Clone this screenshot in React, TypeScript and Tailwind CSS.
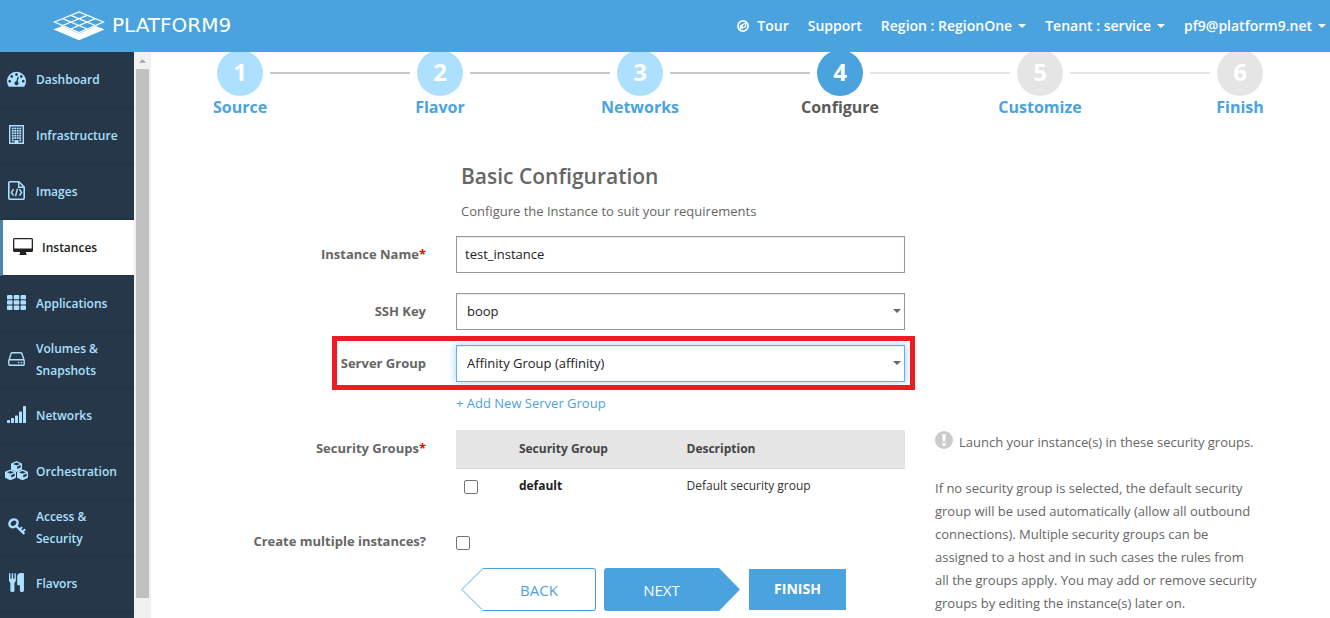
import React, { useState } from 'react';

type IconProps = { className?: string };

const DashboardIcon: React.FC<IconProps> = ({ className }) => (
  <svg viewBox="0 0 1792 1792" fill="currentColor" className={className} aria-hidden="true">
    <path d="M384 1152q0-53-37.5-90.5t-90.5-37.5-90.5 37.5-37.5 90.5 37.5 90.5 90.5 37.5 90.5-37.5 37.5-90.5zm192-448q0-53-37.5-90.5t-90.5-37.5-90.5 37.5-37.5 90.5 37.5 90.5 90.5 37.5 90.5-37.5 37.5-90.5zm428 481l101-382q6-26-7.5-48.5t-38.5-29.5-48 6.5-30 39.5l-101 382q-60 5-107 43.5t-63 98.5q-20 77 20 146t117 89 146-20 89-117q16-60-6-117t-72-91zm660-33q0-53-37.5-90.5t-90.5-37.5-90.5 37.5-37.5 90.5 37.5 90.5 90.5 37.5 90.5-37.5 37.5-90.5zm-640-640q0-53-37.5-90.5t-90.5-37.5-90.5 37.5-37.5 90.5 37.5 90.5 90.5 37.5 90.5-37.5 37.5-90.5zm448 192q0-53-37.5-90.5t-90.5-37.5-90.5 37.5-37.5 90.5 37.5 90.5 90.5 37.5 90.5-37.5 37.5-90.5zm320 448q0 261-141 483-19 29-54 29h-1402q-35 0-54-29-141-221-141-483 0-182 71-348t191-286 286-191 348-71 348 71 286 191 191 286 71 348z" />
  </svg>
);

const BuildingIcon: React.FC<IconProps> = ({ className }) => (
  <svg viewBox="0 0 15 19" fill="currentColor" className={className} aria-hidden="true">
    <path d="M0 0h15v19H0zM1.4 1.4v16.2H5.5v-2.6h4v2.6h4.1V1.4z" fillRule="evenodd" />
    {[2.6, 5, 7.4, 9.8, 12.2].map((y) =>
      [2.8, 5.3, 7.8, 10.3].map((x) => (
        <rect key={`${x}-${y}`} x={x} y={y} width="1.9" height="1.8" />
      ))
    )}
    <rect x="2.8" y="14.6" width="1.9" height="1.7" />
    <rect x="10.3" y="14.6" width="1.9" height="1.7" />
    <rect x="6.5" y="16" width="2" height="2.5" />
  </svg>
);

const FileCodeIcon: React.FC<IconProps> = ({ className }) => (
  <svg viewBox="0 0 17 19" fill="none" stroke="currentColor" className={className} aria-hidden="true">
    <path d="M1.7.8h9.2l5.3 5.2v11.3q0 .9-.9.9H1.7q-.9 0-.9-.9V1.7q0-.9.9-.9z" strokeWidth="1.6" />
    <path d="M10.7 1v5.2H16" strokeWidth="1.4" />
    <path d="M5.5 8.2L3.4 11.4l2.1 3.2M11.5 8.2l2.1 3.2-2.1 3.2M9.5 7.6L7.5 15.2" strokeWidth="1.5" />
  </svg>
);

const DesktopIcon: React.FC<IconProps> = ({ className }) => (
  <svg viewBox="0 0 20 17" fill="currentColor" className={className} aria-hidden="true">
    <path
      fillRule="evenodd"
      d="M1.5 0h17A1.5 1.5 0 0 1 20 1.5v11a1.5 1.5 0 0 1-1.5 1.5H13v1.5h.5V17h-7v-1.5H7V14H1.5A1.5 1.5 0 0 1 0 12.5v-11A1.5 1.5 0 0 1 1.5 0zM1.3 1.3v9.2h17.4V1.3z"
    />
  </svg>
);

const GridIcon: React.FC<IconProps> = ({ className }) => (
  <svg viewBox="0 0 19 15" fill="currentColor" className={className} aria-hidden="true">
    {[0, 5.3, 10.6].map((y) =>
      [0, 6.75, 13.5].map((x) => (
        <rect key={`${x}-${y}`} x={x} y={y} width="5.5" height="4.3" rx="0.9" />
      ))
    )}
  </svg>
);

const DriveIcon: React.FC<IconProps> = ({ className }) => (
  <svg viewBox="0 256 1536 1280" fill="currentColor" className={className} aria-hidden="true">
    <path d="M1040 1216q0 33-23.5 56.5t-56.5 23.5-56.5-23.5-23.5-56.5 23.5-56.5 56.5-23.5 56.5 23.5 23.5 56.5zm256 0q0 33-23.5 56.5t-56.5 23.5-56.5-23.5-23.5-56.5 23.5-56.5 56.5-23.5 56.5 23.5 23.5 56.5zm112 160v-320q0-13-9.5-22.5t-22.5-9.5h-1216q-13 0-22.5 9.5t-9.5 22.5v320q0 13 9.5 22.5t22.5 9.5h1216q13 0 22.5-9.5t9.5-22.5zm-1230-480h1180l-157-482q-4-13-16-21.5t-26-8.5h-782q-14 0-26 8.5t-16 21.5zm1358 160v320q0 66-47 113t-113 47h-1216q-66 0-113-47t-47-113v-320q0-25 16-75l197-606q17-53 63-86t101-33h782q55 0 101 33t63 86l197 606q16 50 16 75z" />
  </svg>
);

const SignalIcon: React.FC<IconProps> = ({ className }) => (
  <svg viewBox="0 0 19 17" fill="currentColor" className={className} aria-hidden="true">
    <rect x="0" y="14" width="3" height="3" rx="0.4" />
    <rect x="4" y="12" width="3" height="5" rx="0.4" />
    <rect x="8" y="9.5" width="3" height="7.5" rx="0.4" />
    <rect x="12" y="5.5" width="3" height="11.5" rx="0.4" />
    <rect x="16" y="0" width="3" height="17" rx="0.4" />
  </svg>
);

const CubesIcon: React.FC<IconProps> = ({ className }) => (
  <svg viewBox="0 0 23 19" fill="currentColor" fillRule="evenodd" className={className} aria-hidden="true">
    {['translate(6 0)', 'translate(0 8.4)', 'translate(12 8.4)'].map((transform) => (
      <path
        key={transform}
        transform={transform}
        d="M5.5 0l5 2.2.5.7V8l-.5.7-5 2.2-5-2.2L0 8V2.9l.5-.7zM5.5 1.5L2.1 2.9l3.4 1.5 3.4-1.5zM6.2 5.5v2.6l3.5-1.5V4z"
      />
    ))}
  </svg>
);

const KeyIcon: React.FC<IconProps> = ({ className }) => (
  <svg
    viewBox="0 0 18 17"
    fill="none"
    stroke="currentColor"
    className={className}
    aria-hidden="true"
  >
    <ellipse cx="5.5" cy="5.3" rx="4.3" ry="3.6" strokeWidth="2.5" transform="rotate(-40 5.5 5.3)" />
    <path d="M8.3 8l8 8" strokeWidth="2.4" />
    <path d="M11.8 11.4l2.3-2.3M14.4 14l2.7-2.7" strokeWidth="2" />
  </svg>
);

const CutleryIcon: React.FC<IconProps> = ({ className }) => (
  <svg viewBox="0 0 1408 1792" fill="currentColor" className={className} aria-hidden="true">
    <path d="M640 64v640q0 61-35.5 111t-92.5 70v779q0 52-38 90t-90 38h-128q-52 0-90-38t-38-90v-779q-57-20-92.5-70t-35.5-111v-640q0-26 19-45t45-19 45 19 19 45v416q0 26 19 45t45 19 45-19 19-45v-416q0-26 19-45t45-19 45 19 19 45v416q0 26 19 45t45 19 45-19 19-45v-416q0-26 19-45t45-19 45 19 19 45zm768 0v1600q0 52-38 90t-90 38h-128q-52 0-90-38t-38-90v-512h-224q-13 0-22.5-9.5t-9.5-22.5v-800q0-132 94-226t226-94h256q26 0 45 19t19 45z" />
  </svg>
);

const CompassIcon: React.FC<IconProps> = ({ className }) => (
  <svg viewBox="0 0 12 12" className={className} aria-hidden="true">
    <circle cx="6" cy="6" r="5.1" fill="none" stroke="currentColor" strokeWidth="1.7" />
    <path fill="currentColor" fillRule="evenodd" d="M9.2 2.3v4.7L2.8 9.7V5.2zM6 4.9v2.3l2-1.2V4z" />
  </svg>
);

const Caret: React.FC<IconProps> = ({ className }) => (
  <svg viewBox="0 0 8 4" fill="currentColor" className={className} aria-hidden="true">
    <path d="M0 0h8L4 4z" />
  </svg>
);

const LogoMark: React.FC<IconProps> = ({ className }) => (
  <svg viewBox="0 0 52 30" className={className} aria-hidden="true">
    <g fill="none" stroke="#fff" strokeWidth="1.3">
      <path d="M26 .9L50.5 11 26 21.5 1.5 11z" />
      <path d="M17.8 4.3L42.3 14.5M9.7 7.6L34.2 18M34.2 4.3L9.7 14.5M42.3 7.6L17.8 18" />
    </g>
    <path d="M.5 18.5L9 15l17 7.5L43 15l8.5 3.5L26 29.3z" fill="#fff" />
  </svg>
);

const navItems = [
  { label: 'Dashboard', Icon: DashboardIcon, size: 'w-[19px] h-[19px]' },
  { label: 'Infrastructure', Icon: BuildingIcon, size: 'w-[15px] h-[19px]' },
  { label: 'Images', Icon: FileCodeIcon, size: 'w-[17px] h-[19px]' },
  { label: 'Instances', Icon: DesktopIcon, size: 'w-[20px] h-[17px]' },
  { label: 'Applications', Icon: GridIcon, size: 'w-[19px] h-[15px]' },
  { label: 'Volumes & Snapshots', Icon: DriveIcon, size: 'w-[17px] h-[14px]' },
  { label: 'Networks', Icon: SignalIcon, size: 'w-[19px] h-[17px]' },
  { label: 'Orchestration', Icon: CubesIcon, size: 'w-[23px] h-[19px]' },
  { label: 'Access & Security', Icon: KeyIcon, size: 'w-[18px] h-[17px]' },
  { label: 'Flavors', Icon: CutleryIcon, size: 'w-[15px] h-[19px]' },
];

const steps = ['Source', 'Flavor', 'Networks', 'Configure', 'Customize', 'Finish'];
const currentStep = 3;

const fieldClass =
  'w-full h-[37px] border border-[#999] bg-white text-[13px] text-[#222] shadow-[inset_0_1px_1px_rgba(0,0,0,0.08)] outline-none';
const labelClass = 'pb-0.5 text-right text-[13px] leading-5 font-bold text-[#666]';
const rowClass = 'grid grid-cols-[275fr_449fr_331fr] gap-x-[30px] pr-16';

const Header: React.FC = () => (
  <header className="flex shrink-0 items-center justify-between h-[52px] pl-[53px] pr-1 bg-[#4aa3df] text-white">
    <a href="#home" className="flex items-center gap-[7px]">
      <LogoMark className="w-[52px] h-[30px]" />
      <span className="pb-0.5 font-['DejaVu_Sans'] text-[20px] leading-6">PLATFORM9</span>
    </a>
    <nav className="flex items-center gap-[19px] text-sm font-semibold whitespace-nowrap">
      <a href="#tour" className="flex items-center gap-2">
        <CompassIcon className="w-3 h-3" />
        Tour
      </a>
      <a href="#support">Support</a>
      {['Region : RegionOne', 'Tenant : service', 'pf9@platform9.net'].map((label) => (
        <button key={label} type="button" className="flex items-center gap-[6px]">
          {label}
          <Caret className="w-2 h-1" />
        </button>
      ))}
    </nav>
  </header>
);

const Sidebar: React.FC = () => (
  <div className="flex shrink-0">
    <nav className="w-[134px] overflow-hidden bg-[#253748] text-xs leading-[22px] font-semibold">
      {navItems.map(({ label, Icon, size }) => {
        const active = label === 'Instances';
        return (
          <a
            key={label}
            href={`#${label}`}
            className={`flex items-center gap-2 h-14 border-b border-[#1a3347] ${
              active
                ? 'bg-white text-[#222] border-l-3 border-l-[#4a86ae] pl-2'
                : 'text-[#ade0ff] pl-[5px]'
            }`}
          >
            <span className="flex shrink-0 justify-center w-[23px] pb-0.5">
              <Icon className={size} />
            </span>
            <span className="pr-2">{label}</span>
          </a>
        );
      })}
    </nav>
    <div className="flex flex-col items-center w-[17px] bg-[#f1f1f1]">
      <div className="flex shrink-0 items-center justify-center h-[17px] text-[#a3a3a3]">
        <Caret className="w-[7px] h-1 rotate-180" />
      </div>
      <div className="grow w-[13px] mb-5 bg-[#c1c1c1]" />
    </div>
  </div>
);

const Stepper: React.FC = () => (
  <ol className="grid grid-cols-6 -ml-[11px] -mr-[10px] -mt-[2px]">
    {steps.map((step, i) => {
      const lineColor = (reached: boolean) => (reached ? 'bg-[#c8c8c8]' : 'bg-[#e5e5e5]');
      return (
        <li key={step} className="flex flex-col">
          <div className="flex items-center">
            <span className={`grow h-[2px] mr-[7px] ${i === 0 ? 'invisible' : lineColor(i <= currentStep)}`} />
            <span
              className={`flex items-center justify-center w-[46px] h-[46px] pb-0.5 rounded-full text-2xl font-bold text-white ${
                i < currentStep ? 'bg-[#ade0ff]' : i === currentStep ? 'bg-[#4aa3df]' : 'bg-[#e5e5e5]'
              }`}
            >
              {i + 1}
            </span>
            <span
              className={`grow h-[2px] ml-[7px] ${
                i === steps.length - 1 ? 'invisible' : lineColor(i < currentStep)
              }`}
            />
          </div>
          <span
            className={`text-center text-base leading-[22px] font-bold ${
              i === currentStep ? 'text-[#5a5a5a]' : 'text-[#4aa3df]'
            }`}
          >
            {step}
          </span>
        </li>
      );
    })}
  </ol>
);

export default function App() {
  const [name, setName] = useState('test_instance');

  return (
    <div className="flex flex-col h-screen overflow-hidden bg-white font-['Open_Sans',sans-serif]">
      <Header />
      <div className="flex grow min-h-0">
        <Sidebar />
        <main className="grow min-w-0 overflow-hidden">
          <Stepper />

          <form onSubmit={(e) => e.preventDefault()}>
            {/* Title */}
            <div className={`${rowClass} mt-[42px]`}>
              <div className="col-start-2 pl-[5px] text-[#666]">
                <h1 className="text-[21px] leading-8 font-semibold">Basic Configuration</h1>
                <p className="mt-[9px] text-[13px] leading-5">Configure the Instance to suit your requirements</p>
              </div>
            </div>

            {/* Fields */}
            <div className={`${rowClass} items-center mt-[15px]`}>
              <label htmlFor="name" className={labelClass}>
                Instance Name<span className="text-[#f00]">*</span>
              </label>
              <input
                id="name"
                type="text"
                value={name}
                onChange={(e) => setName(e.target.value)}
                className={`${fieldClass} px-2 pb-0.5`}
              />
            </div>

            <div className={`${rowClass} items-center mt-5`}>
              <label htmlFor="ssh" className={labelClass}>
                SSH Key
              </label>
              <div className="relative">
                <select id="ssh" className={`${fieldClass} appearance-none px-[10px]`}>
                  <option>boop</option>
                </select>
                <Caret className="absolute right-1 top-4 w-2 h-1 text-[#666] pointer-events-none" />
              </div>
            </div>

            <div className={`${rowClass} items-center mt-[15px]`}>
              <label htmlFor="group" className={labelClass}>
                Server Group
              </label>
              <div className="relative">
                <select
                  id="group"
                  className="w-full h-[37px] appearance-none border border-[#66afe9] bg-white px-[10px] text-[13px] text-[#222] shadow-[inset_0_1px_1px_rgba(0,0,0,0.08),0_0_8px_rgba(102,175,233,0.6)] outline-none"
                >
                  <option>Affinity Group (affinity)</option>
                </select>
                <Caret className="absolute right-1 top-4 w-2 h-1 text-[#666] pointer-events-none" />
                <div className="absolute -left-[124px] -right-[10px] -top-[9px] -bottom-2 border-5 border-[#ed1c24] pointer-events-none" />
              </div>
            </div>

            <div className={`${rowClass} mt-[11px]`}>
              <a href="#new-group" className="col-start-2 text-[13px] leading-5 text-[#4aa3df]">
                + Add New Server Group
              </a>
            </div>

            <div className={`${rowClass} mt-[17px]`}>
              <div>
                <div className={`${labelClass} pt-2`}>
                  Security Groups<span className="text-[#f00]">*</span>
                </div>
                <div className={`${labelClass} mt-[71px]`}>
                  <label htmlFor="multiple">Create multiple instances?</label>
                </div>
              </div>

              <div>
                <table className="w-full table-fixed text-left text-xs text-[#333]">
                  <thead>
                    <tr className="h-[38px] bg-[#e5e5e5] border-b border-[#d8d8d8] text-[#444]">
                      <th className="w-[12%]" aria-label="Select" />
                      <th className="pl-[9px] font-bold">Security Group</th>
                      <th className="w-[50%] pl-[6px] font-bold">Description</th>
                    </tr>
                  </thead>
                  <tbody>
                    <tr className="h-[38px]">
                      <td className="pl-2">
                        <input
                          type="checkbox"
                          aria-label="default"
                          className="block w-[14px] h-[14px] appearance-none rounded-[2px] border border-[#767676] checked:bg-[#4aa3df]"
                        />
                      </td>
                      <td className="pl-[9px] pb-0.5 font-bold text-[#222]">default</td>
                      <td className="pl-[6px] pb-0.5">Default security group</td>
                    </tr>
                  </tbody>
                </table>
                <input
                  id="multiple"
                  type="checkbox"
                  className="block mt-[30px] w-[14px] h-[14px] appearance-none rounded-[2px] border border-[#767676] checked:bg-[#4aa3df]"
                />

                {/* Wizard buttons */}
                <div className="flex items-center gap-2 mt-[18px] pl-[5px]">
                  <button type="button" className="flex items-stretch h-[43px] text-[15px] text-[#4aa3df]">
                    <svg viewBox="0 0 22 43" className="w-[22px] h-[43px]" aria-hidden="true">
                      <path d="M22 .5L.7 21.5 22 42.5" fill="none" stroke="#a5d1ef" strokeWidth="1.3" />
                    </svg>
                    <span className="flex items-center justify-center w-[113px] pt-[2px] border border-l-0 border-[#4aa3df] rounded-r-[3px]">
                      BACK
                    </span>
                  </button>
                  <button type="button" className="flex items-stretch h-[43px] text-[15px] text-white">
                    <span className="flex items-center justify-center w-[115px] pt-[2px] rounded-l-[3px] bg-[#4aa3df]">
                      NEXT
                    </span>
                    <svg viewBox="0 0 22 43" className="w-[22px] h-[43px]" aria-hidden="true">
                      <path d="M0 0l21 21.5L0 43z" fill="#4aa3df" />
                    </svg>
                  </button>
                  <button type="submit" className="w-[97px] h-[41px] pb-0.5 bg-[#4aa3df] text-sm font-bold text-white">
                    FINISH
                  </button>
                </div>
              </div>

              <div className="pt-px text-[13px] leading-[23px] text-[#666]">
                <p className="flex items-start gap-[6px] whitespace-nowrap">
                  <svg viewBox="0 0 18 18" className="shrink-0 w-[18px] h-[18px]" aria-hidden="true">
                    <circle cx="9" cy="9" r="9" fill="#ccc" />
                    <path d="M7.3 3h3.4l-.4 7.5H7.7zM7.4 12h3.2v3H7.4z" fill="#fff" />
                  </svg>
                  Launch your instance(s) in these security groups.
                </p>
                <p className="mt-[23px] pr-1.5">
                  If no security group is selected, the default security group will be used automatically (allow
                  all outbound connections). Multiple security groups can be assigned to a host and in such cases
                  the rules from all the groups apply. You may add or remove security groups by editing the
                  instance(s) later on.
                </p>
              </div>
            </div>
          </form>
        </main>
      </div>
    </div>
  );
}
